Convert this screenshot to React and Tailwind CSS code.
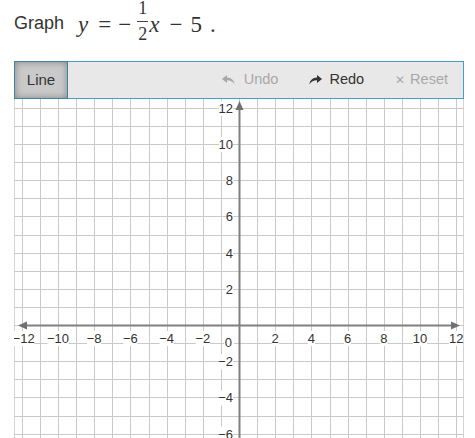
import React from 'react';

const U = 18.1;
const OX = 225;
const OY = 226;
const W = 450;
const H = 340;

function Plot() {
  const vx = [];
  for (let i = -12; i <= 12; i++) vx.push(OX + i * U);
  const hy = [];
  for (let j = -6; j <= 12; j++) hy.push(OY - j * U);
  const xs = [-12, -10, -8, -6, -4, -2, 2, 4, 6, 8, 10, 12];
  const ys = [12, 10, 8, 6, 4, 2, -2, -4, -6];
  const lbl = (n) => (n < 0 ? '\u2212' + Math.abs(n) : String(n));
  return (
    <svg width={W} height={H} className="block" style={{ fontFamily: '"Liberation Sans", Arial, sans-serif' }}>
      <rect x="0" y="0" width={W} height={H} fill="#fff" />
      <line x1="0.5" y1="0" x2="0.5" y2={H} stroke="#d4d4d4" />
      <line x1={W - 0.5} y1="0" x2={W - 0.5} y2={H} stroke="#d4d4d4" />
      {vx.map((x, i) => (
        <line key={'v' + i} x1={Math.round(x) + 0.5} y1="0" x2={Math.round(x) + 0.5} y2={H} stroke="#c9c9c9" />
      ))}
      {hy.map((y, i) => (
        <line key={'h' + i} x1="0" y1={Math.round(y) + 0.5} x2={W} y2={Math.round(y) + 0.5} stroke="#c9c9c9" />
      ))}
      {/* axes */}
      <line x1="12" y1={OY + 0.5} x2={W - 12} y2={OY + 0.5} stroke="#808080" strokeWidth="2" />
      <line x1={OX + 0.5} y1="10" x2={OX + 0.5} y2={H} stroke="#808080" strokeWidth="2" />
      <polygon points={`4,${OY + 0.5} 13,${OY - 3.5} 13,${OY + 4.5}`} fill="#707070" />
      <polygon points={`${W - 4},${OY + 0.5} ${W - 13},${OY - 3.5} ${W - 13},${OY + 4.5}`} fill="#707070" />
      <polygon points={`${OX + 0.5},2 ${OX - 3.5},11 ${OX + 4.5},11`} fill="#707070" />
      {xs.map((n) => {
        const x = n === -12 ? OX + n * U + 2 : OX + n * U;
        const t = lbl(n);
        const w = t.length * 7;
        return (
          <g key={'xl' + n}>
            <rect x={x - w / 2} y={OY + 6} width={w} height={15} fill="#fff" />
            <text x={x} y={OY + 18} fontSize="13" fill="#333" textAnchor="middle">{t}</text>
          </g>
        );
      })}
      {ys.map((n) => {
        const y = OY - n * U;
        const t = lbl(n);
        const w = t.length * 7;
        return (
          <g key={'yl' + n}>
            <rect x={OX - 6 - w} y={y - 7} width={w} height={15} fill="#fff" />
            <text x={OX - 6} y={y + 5} fontSize="13" fill="#333" textAnchor="end">{t}</text>
          </g>
        );
      })}
      <rect x={OX - 15} y={OY + 11} width={10} height={14} fill="#fff" />
      <text x={OX - 7} y={OY + 22} fontSize="13" fill="#333" textAnchor="end">0</text>
    </svg>
  );
}

function UndoIcon({ color }) {
  return (
    <svg width="13" height="10" viewBox="0 0 13 10">
      <path d="M5 0 L0 4 L5 8 L5 5.3 C8.5 5.3 10.8 6.5 12.6 9.5 C12 5.4 9.5 2.8 5 2.6 Z" fill={color} />
    </svg>
  );
}

function RedoIcon({ color }) {
  return (
    <svg width="13" height="10" viewBox="0 0 13 10">
      <path d="M8 0 L13 4 L8 8 L8 5.3 C4.5 5.3 2.2 6.5 0.4 9.5 C1 5.4 3.5 2.8 8 2.6 Z" fill={color} />
    </svg>
  );
}

const serif = { fontFamily: '"Liberation Serif", "Times New Roman", serif' };

export default function App() {
  return (
    <div className="w-[475px] h-[438px] overflow-hidden bg-white" style={{ fontFamily: '"Liberation Sans", Arial, sans-serif' }}>
      {/* Prompt */}
      <div className="h-[61px] pl-[14px] pt-[4px] flex items-start">
        <span className="text-[18px] text-[#333] mt-[6px]">Graph</span>
        <span className="ml-[14px] flex items-start text-[#333]" style={serif}>
          <span className="italic text-[23px] mt-[4px]" style={serif}>y</span>
          <span className="text-[23px] mt-[4px] ml-[10px]">=</span>
          <span className="text-[23px] mt-[4px] ml-[7px]">{'\u2212'}</span>
          <span className="flex flex-col items-center ml-[6px] -mt-[3px]">
            <span className="text-[18px] leading-[15px] px-[1px]">1</span>
            <span className="h-[1px] w-[11px] bg-[#444] mt-[5px]"></span>
            <span className="text-[18px] leading-[19px] px-[1px] mt-[3px]">2</span>
          </span>
          <span className="italic text-[23px] mt-[4px] ml-[1px]" style={serif}>x</span>
          <span className="text-[23px] mt-[4px] ml-[10px]">{'\u2212'}</span>
          <span className="text-[23px] mt-[4px] ml-[8px]">5</span>
          <span className="text-[23px] mt-[4px] ml-[8px]">.</span>
        </span>
      </div>

      {/* Toolbar */}
      <div className="ml-[14px] w-[450px] h-[38px] border border-[#45a0c4] bg-[#e8e8e8] flex items-stretch">
        <div className="w-[54px] -m-[1px] border border-[#3a86a6] bg-[#c9c9c9] shadow-[inset_0_0_7px_rgba(0,0,0,0.35)] flex items-center justify-center text-[15px] text-[#333]">
          Line
        </div>
        <div className="flex-1 flex items-center justify-end pr-[15px] text-[14.5px]">
          <div className="flex items-center gap-[9px] text-[#a8a8a8]">
            <UndoIcon color="#a8a8a8" />
            <span>Undo</span>
          </div>
          <div className="flex items-center gap-[7px] text-[#333] ml-[31px]">
            <RedoIcon color="#333" />
            <span>Redo</span>
          </div>
          <div className="flex items-center gap-[5px] text-[#a8a8a8] ml-[31px]">
            <span className="text-[12px]">{'\u2715'}</span>
            <span>Reset</span>
          </div>
        </div>
      </div>

      {/* Plot */}
      <div className="ml-[14px]">
        <Plot />
      </div>
    </div>
  );
}
